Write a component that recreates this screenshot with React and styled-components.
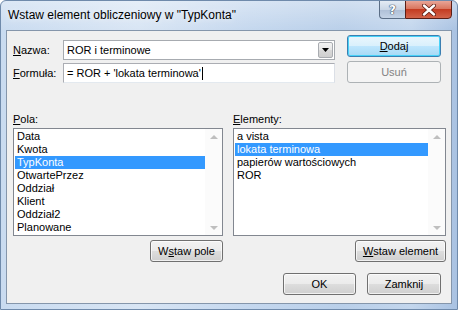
import styled, { createGlobalStyle } from "styled-components";

const GlobalStyle = createGlobalStyle`
  html, body {
    margin: 0;
    padding: 0;
    background: #ffffff;
  }
  body {
    font-family: "Liberation Sans", Arial, sans-serif;
    font-size: 11px;
    color: #000000;
  }
`;

const pola = [
  "Data",
  "Kwota",
  "TypKonta",
  "OtwartePrzez",
  "Oddział",
  "Klient",
  "Oddział2",
  "Planowane",
];

const elementy = ["a vista", "lokata terminowa", "papierów wartościowych", "ROR"];

function ListBox({ items, selected }) {
  return (
    <List>
      <Items>
        {items.map(item => (
          <Item key={item} selected={item === selected}>
            {item}
          </Item>
        ))}
      </Items>
      <Scrollbar>
        <Arrow up />
        <Arrow />
      </Scrollbar>
    </List>
  );
}

function App() {
  return (
    <>
      <GlobalStyle />
      <Window>
        <TitleBar>
          <Title>Wstaw element obliczeniowy w "TypKonta"</Title>
          <Caption>
            <HelpButton>?</HelpButton>
            <CloseButton>
              <svg width="14" height="12" viewBox="0 0 14 12">
                <path
                  d="M2 1.5 L12 10.5 M12 1.5 L2 10.5"
                  stroke="#5a1a10"
                  strokeWidth="4"
                  strokeLinecap="round"
                />
                <path
                  d="M2 1.5 L12 10.5 M12 1.5 L2 10.5"
                  stroke="#ffffff"
                  strokeWidth="2.4"
                  strokeLinecap="round"
                />
              </svg>
            </CloseButton>
          </Caption>
        </TitleBar>
        <Client>
          <TopRow>
            <FieldGrid>
              <Label>
                <u>N</u>azwa:
              </Label>
              <Combo>
                <InputText>ROR i terminowe</InputText>
                <DropButton>
                  <svg width="7" height="4" viewBox="0 0 7 4">
                    <path d="M0 0 H7 L3.5 4 Z" fill="#000" />
                  </svg>
                </DropButton>
              </Combo>
              <Label>
                <u>F</u>ormuła:
              </Label>
              <TextBox>
                <InputText>
                  = ROR + 'lokata terminowa'<Caret />
                </InputText>
              </TextBox>
            </FieldGrid>
            <ButtonColumn>
              <Button primary width={94}>
                <u>D</u>odaj
              </Button>
              <Button disabled width={94}>
                Usuń
              </Button>
            </ButtonColumn>
          </TopRow>
          <ListsRow>
            <ListColumn>
              <ListLabel>
                <u>P</u>ola:
              </ListLabel>
              <ListBox items={pola} selected="TypKonta" />
              <ButtonRow>
                <Button width={73}>
                  W<u>s</u>taw pole
                </Button>
              </ButtonRow>
            </ListColumn>
            <ListColumn>
              <ListLabel>
                <u>E</u>lementy:
              </ListLabel>
              <ListBox items={elementy} selected="lokata terminowa" />
              <ButtonRow>
                <Button width={91}>
                  <u>W</u>staw element
                </Button>
              </ButtonRow>
            </ListColumn>
          </ListsRow>
          <Footer>
            <Button width={73}>OK</Button>
            <Button width={74}>Zamknij</Button>
          </Footer>
        </Client>
      </Window>
    </>
  );
}

const Window = styled.div`
  width: 458px;
  height: 310px;
  box-sizing: border-box;
  display: flex;
  flex-direction: column;
  border-radius: 6px 6px 0 0;
  overflow: hidden;
  background: linear-gradient(
      180deg,
      rgba(255, 255, 255, 0.35) 0px,
      rgba(255, 255, 255, 0) 30px
    ),
    linear-gradient(
      90deg,
      #c9dbf0 0%,
      #d8e5f4 30%,
      #c4d7ee 55%,
      #b9cfe9 75%,
      #c3d6ed 90%,
      #a9c2e2 100%
    );
  border: 1px solid #6f8aab;
`;

const TitleBar = styled.div`
  height: 29px;
  display: flex;
  align-items: flex-start;
  flex-shrink: 0;
`;

const Title = styled.div`
  padding-left: 7px;
  padding-top: 7px;
  font-family: "Liberation Sans", Arial, sans-serif;
  font-size: 12px;
  color: #000000;
  text-shadow: 0 0 6px rgba(255, 255, 255, 0.9);
`;

const Caption = styled.div`
  margin-left: auto;
  margin-right: 5px;
  margin-top: -1px;
  display: flex;
`;

const HelpButton = styled.div`
  width: 26px;
  height: 19px;
  box-sizing: border-box;
  border: 1px solid #5b6e86;
  border-right: none;
  border-radius: 0 0 0 4px;
  background: linear-gradient(180deg, #e4ebf4 0%, #c9d6e6 50%, #aebfd6 51%, #c4d3e6 100%);
  display: flex;
  align-items: center;
  justify-content: center;
  font-family: "DejaVu Sans", sans-serif;
  font-weight: bold;
  font-size: 12px;
  color: #ffffff;
  text-shadow: 0 0 1px #33455c, 0 0 1px #33455c, 0 0 1px #33455c;
`;

const CloseButton = styled.div`
  width: 47px;
  height: 19px;
  box-sizing: border-box;
  border: 1px solid #5a1e16;
  border-radius: 0 0 4px 0;
  background: linear-gradient(180deg, #e8a597 0%, #d9765f 45%, #c43c22 50%, #d2634a 100%);
  display: flex;
  align-items: center;
  justify-content: center;
`;

const Client = styled.div`
  flex: 1;
  margin: 0 5px 5px 5px;
  border: 1px solid #8596ab;
  background: #f0f0f0;
  padding: 4px 10px 0 6px;
  display: flex;
  flex-direction: column;
`;

const TopRow = styled.div`
  display: flex;
  gap: 12px;
`;

const FieldGrid = styled.div`
  margin-top: 5px;
  display: grid;
  grid-template-columns: 50px 272px;
  grid-auto-rows: 20px;
  row-gap: 3px;
  align-items: center;
`;

const Label = styled.div`
  font-size: 11px;
  line-height: 13px;
  u {
    text-decoration: underline;
  }
`;

const TextBox = styled.div`
  height: 20px;
  box-sizing: border-box;
  border: 1px solid #abadb3;
  border-right-color: #dbdfe6;
  border-bottom-color: #e3e9ef;
  background: #ffffff;
  display: flex;
  align-items: center;
  padding-left: 3px;
`;

const Combo = styled(TextBox)`
  padding-right: 1px;
  border-color: #a7abb0;
`;

const InputText = styled.div`
  flex: 1;
  font-size: 11px;
  white-space: nowrap;
  display: flex;
  align-items: center;
`;

const Caret = styled.span`
  display: inline-block;
  width: 1px;
  height: 13px;
  margin-left: 1px;
  background: #000000;
`;

const DropButton = styled.div`
  width: 15px;
  height: 16px;
  box-sizing: border-box;
  border: 1px solid #a9acb1;
  border-radius: 2px;
  background: linear-gradient(180deg, #f3f3f3 0%, #e6e6e6 50%, #d9d9d9 51%, #cfcfcf 100%);
  display: flex;
  align-items: center;
  justify-content: center;
`;

const ButtonColumn = styled.div`
  display: flex;
  flex-direction: column;
  gap: 4px;
`;

const Button = styled.div`
  width: ${props => props.width}px;
  height: 22px;
  box-sizing: border-box;
  border: 1px solid ${props => (props.primary ? "#3c7fb1" : props.disabled ? "#adb2b5" : "#707070")};
  border-radius: 3px;
  background: ${props =>
    props.disabled
      ? "#f4f4f4"
      : props.primary
      ? "linear-gradient(180deg, #eaf6fd 0%, #d9f0fc 50%, #bee6fd 51%, #a7d9f5 100%)"
      : "linear-gradient(180deg, #f2f2f2 0%, #ebebeb 50%, #dddddd 51%, #cfcfcf 100%)"};
  box-shadow: ${props =>
    props.primary
      ? "inset 0 0 0 1px #48d2f8"
      : props.disabled
      ? "none"
      : "inset 0 0 0 1px rgba(255, 255, 255, 0.7)"};
  color: ${props => (props.disabled ? "#838383" : "#000000")};
  display: flex;
  align-items: center;
  justify-content: center;
  font-size: 11px;
  line-height: 13px;
`;

const ListsRow = styled.div`
  margin-top: 30px;
  display: grid;
  grid-template-columns: 210px 213px;
  column-gap: 10px;
`;

const ListColumn = styled.div`
  display: flex;
  flex-direction: column;
`;

const ListLabel = styled(Label)`
  height: 15px;
`;

const List = styled.div`
  height: 108px;
  box-sizing: border-box;
  border: 1px solid #828790;
  background: #ffffff;
  display: flex;
`;

const Items = styled.div`
  flex: 1;
  padding: 1px 0 0 1px;
`;

const Item = styled.div`
  height: 13px;
  line-height: 13px;
  padding-left: 2px;
  font-size: 11px;
  white-space: nowrap;
  background: ${props => (props.selected ? "#3399ff" : "transparent")};
  color: ${props => (props.selected ? "#ffffff" : "#000000")};
`;

const Scrollbar = styled.div`
  width: 17px;
  background: #fbfbfb;
  display: flex;
  flex-direction: column;
  justify-content: space-between;
  align-items: center;
  padding: 6px 0 5px;
  box-sizing: border-box;
`;

const Arrow = styled.div`
  width: 0;
  height: 0;
  border-left: 4px solid transparent;
  border-right: 4px solid transparent;
  ${props =>
    props.up
      ? "border-bottom: 4px solid #bfbfbf;"
      : "border-top: 4px solid #bfbfbf;"}
`;

const ButtonRow = styled.div`
  display: flex;
  justify-content: flex-end;
  margin-top: 4px;
`;

const Footer = styled.div`
  display: flex;
  justify-content: flex-end;
  gap: 11px;
  margin-top: 11px;
`;

export default App;
